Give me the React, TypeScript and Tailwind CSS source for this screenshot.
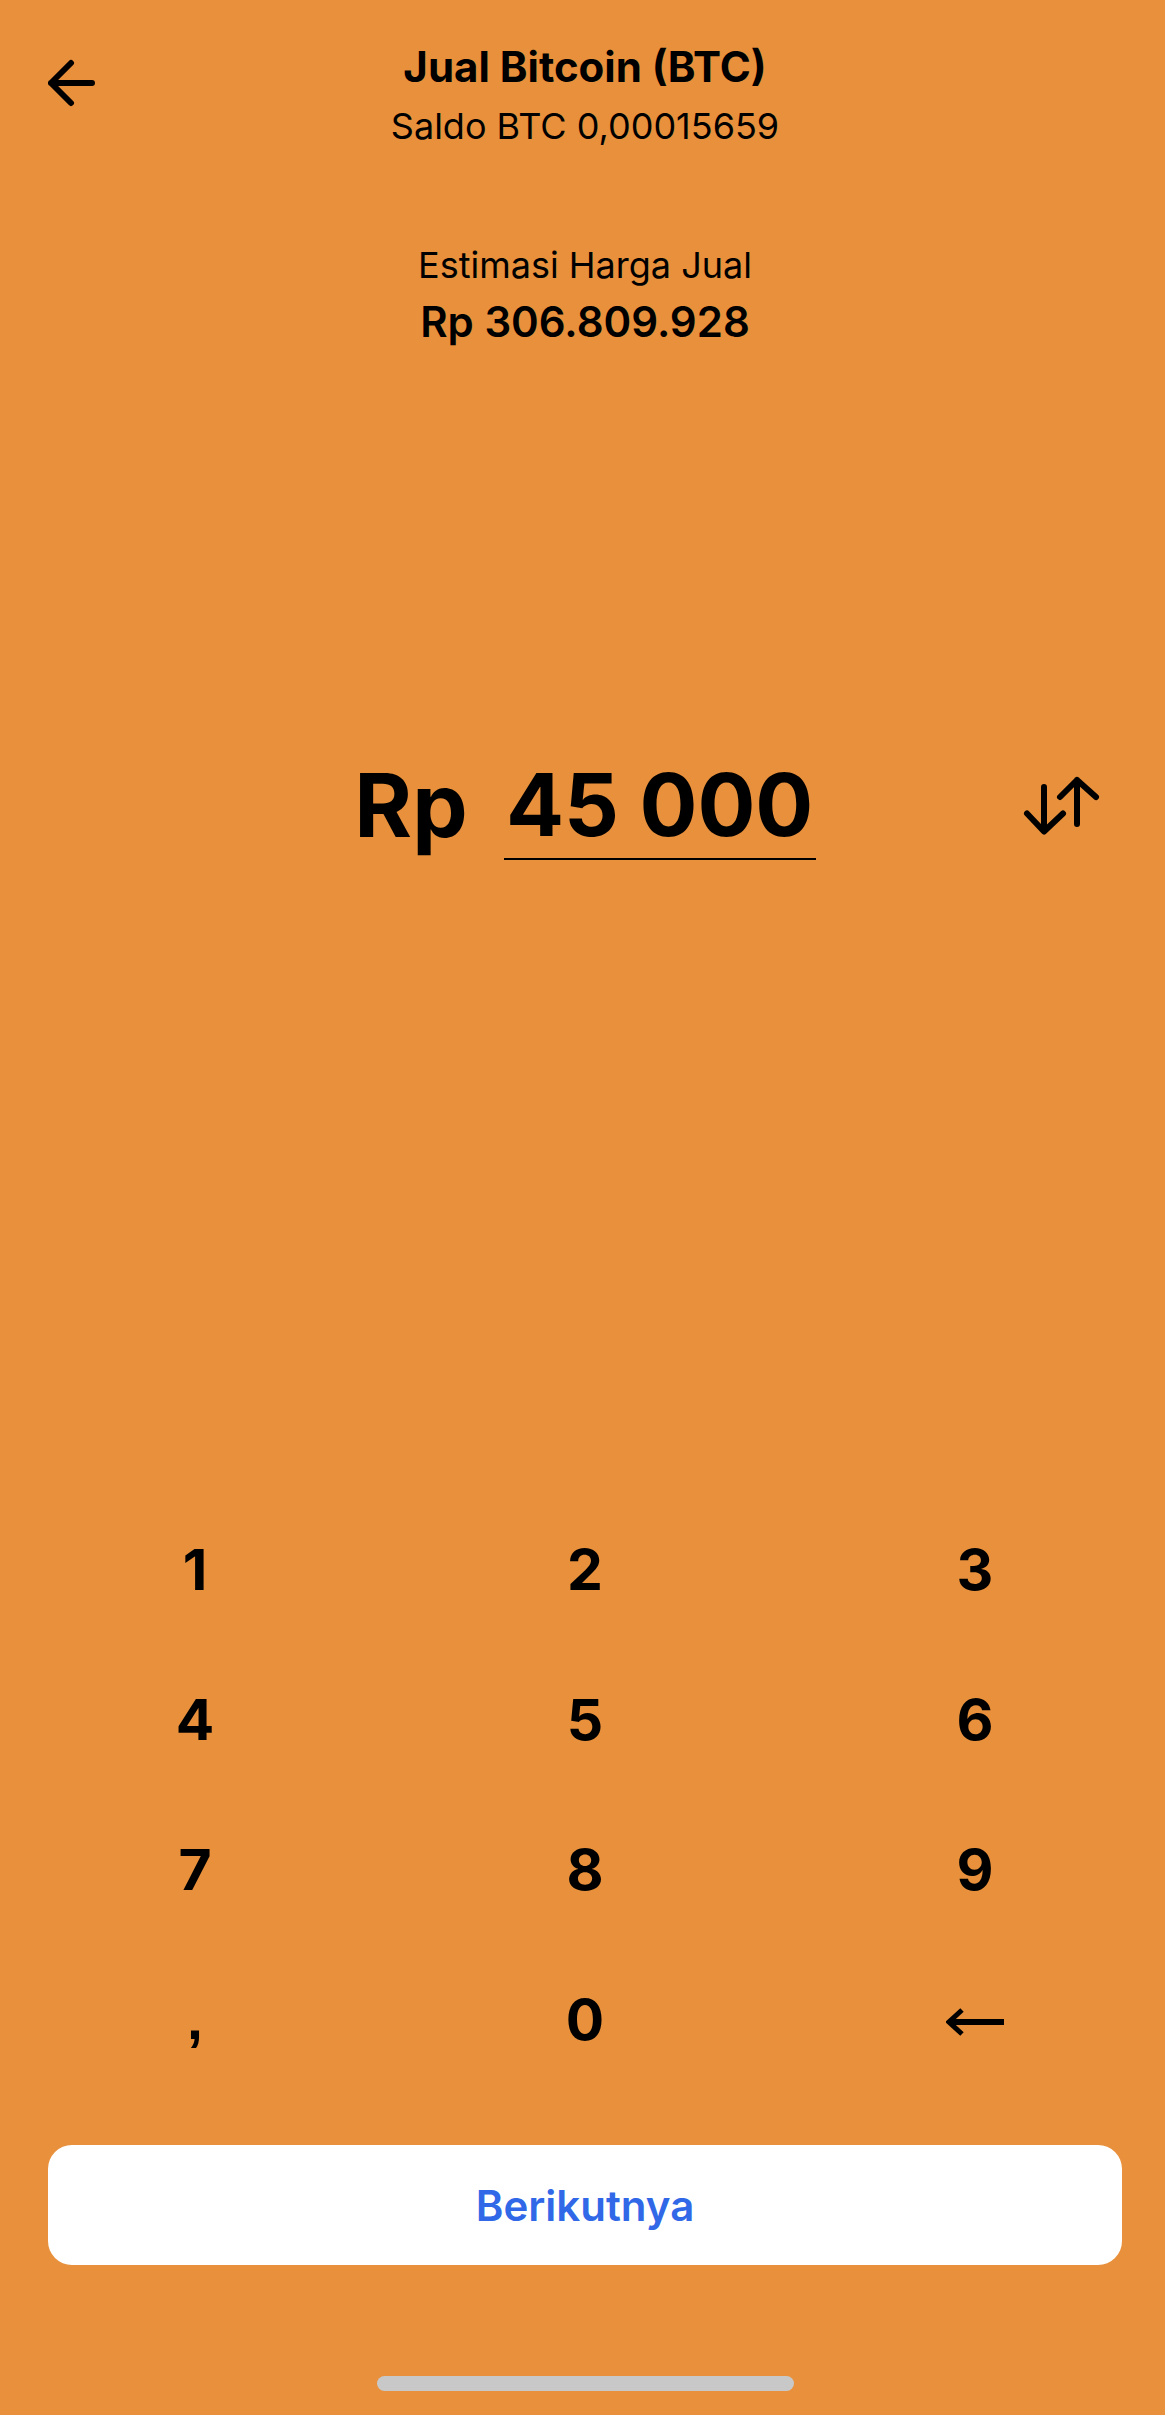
import { useState } from "react";

const digits = ["1", "2", "3", "4", "5", "6", "7", "8", "9"];

function BackIcon() {
  return (
    <svg width="48" height="48" viewBox="0 0 48 48" fill="none" stroke="currentColor" strokeWidth="6" strokeLinecap="round" strokeLinejoin="round" aria-hidden="true">
      <path d="M44 24H3M23 4L3 24l20 20" />
    </svg>
  );
}

function SwapIcon() {
  return (
    <svg width="82" height="70" viewBox="0 0 82 70" fill="none" stroke="currentColor" strokeWidth="6" strokeLinecap="round" strokeLinejoin="round" aria-hidden="true">
      <path d="M24 17V61M7 43.5l17 18 19-18M57 54V10M40 27l17-17 19 17" />
    </svg>
  );
}

function EraseIcon() {
  return (
    <svg width="58" height="28" viewBox="0 0 58 28" fill="none" stroke="currentColor" aria-hidden="true">
      <path d="M58 14H5" strokeWidth="6" />
      <path d="M16 2L3 14l13 12" strokeWidth="5" />
    </svg>
  );
}

export default function App() {
  const [amount, setAmount] = useState("45 000");

  const update = (raw: string) => {
    const [whole, ...rest] = raw.replace(/[^\d,]/g, "").split(",");
    const grouped = whole.replace(/\B(?=(\d{3})+$)/g, " ");
    setAmount(rest.length ? grouped + "," + rest.join("") : grouped);
  };

  return (
    <div className="min-h-screen overflow-x-hidden bg-[#e8903b] font-['Inter',sans-serif] text-black">
      <main className="-mr-[5px] flex min-h-screen flex-col pb-6">
        <header className="grid grid-cols-[1fr_auto_1fr] items-start px-12 pt-[42px]">
          <button type="button" aria-label="Kembali" className="mt-[17px] justify-self-start">
            <BackIcon />
          </button>
          <div className="text-center">
            <h1 className="text-[42px] leading-[50px] font-bold">Jual Bitcoin (BTC)</h1>
            <p className="mt-3 text-[36px] leading-[44px]">Saldo BTC 0,00015659</p>
          </div>
        </header>

        <section className="mt-[95px] text-center">
          <p className="text-[36px] leading-[44px]">Estimasi Harga Jual</p>
          <p className="mt-[10px] text-[42px] leading-[50px] font-semibold">Rp 306.809.928</p>
        </section>

        <section className="mt-[403px] grid grid-cols-[1fr_auto_1fr] items-center px-12">
          <div className="col-start-2 flex items-end gap-9">
            <label htmlFor="amount" className="text-[88px] leading-[110px] font-bold">Rp</label>
            <input
              id="amount"
              inputMode="decimal"
              value={amount}
              onChange={(e) => update(e.target.value)}
              className="h-[110px] w-[312px] border-b-2 border-black bg-transparent pt-[2px] text-center text-[86px] font-bold outline-none"
            />
          </div>
          <button type="button" aria-label="Tukar mata uang" className="mr-5 justify-self-end">
            <SwapIcon />
          </button>
        </section>

        <section aria-label="Papan angka" className="mt-auto grid h-[600px] grid-cols-3 grid-rows-4 text-[57px] font-bold">
          {digits.map((d) => (
            <button key={d} type="button" onClick={() => update(amount + d)}>
              {d}
            </button>
          ))}
          <button type="button" className="font-['Liberation_Sans',sans-serif]" onClick={() => update(amount + ",")}>
            ,
          </button>
          <button type="button" onClick={() => update(amount + "0")}>
            0
          </button>
          <button type="button" aria-label="Hapus" className="flex items-center justify-center pt-1" onClick={() => update(amount.slice(0, -1))}>
            <EraseIcon />
          </button>
        </section>

        <div className="mt-[50px] px-12">
          <button type="button" className="h-[120px] w-full rounded-3xl bg-white text-[42px] font-semibold text-[#3068e8]">
            Berikutnya
          </button>
        </div>

        <div className="mx-auto mt-[111px] h-[15px] w-[417px] rounded-full bg-[#c8c8c8]" />
      </main>
    </div>
  );
}
